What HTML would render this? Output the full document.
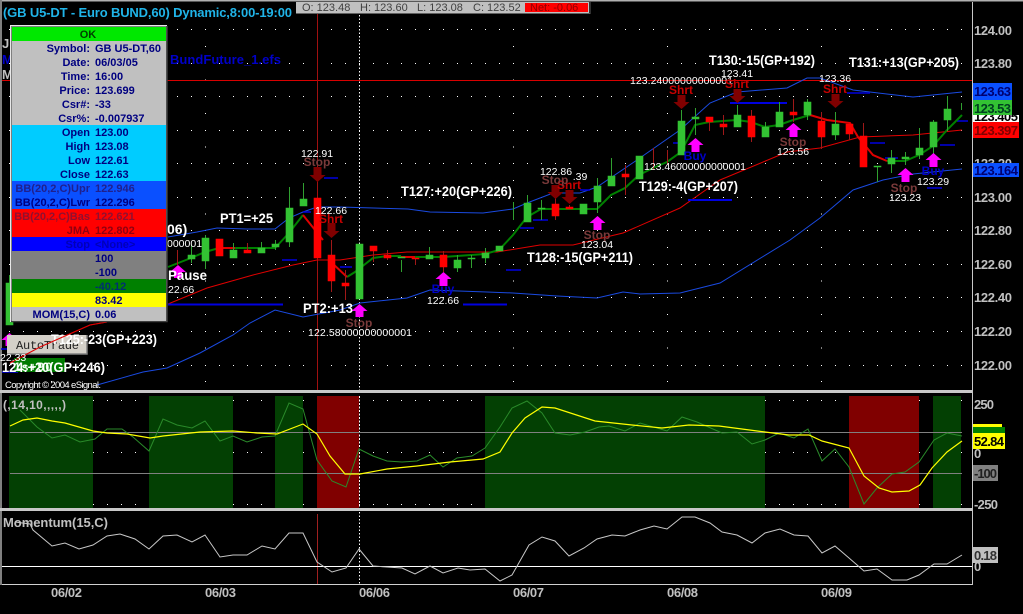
<!DOCTYPE html>
<html><head><meta charset="utf-8"><style>
html,body{margin:0;padding:0;background:#000;width:1023px;height:614px;overflow:hidden}
svg{display:block;position:absolute;left:0;top:0}
text{font-family:"Liberation Sans",sans-serif}
.w{fill:#fff;font-size:14px;font-weight:bold}
.s{fill:#fff;font-size:10.5px;text-anchor:middle}
.st{fill:#7a3a3a;font-size:12px;font-weight:bold;text-anchor:middle}
.sh{fill:#c80000;font-size:12px;font-weight:bold;text-anchor:middle}
.b{fill:#0000c8;font-size:12px;font-weight:bold;text-anchor:middle}
.a{fill:#c0c0c0;font-size:13px;font-weight:bold}
.n{fill:#000070;font-size:13px;font-weight:bold}
.p{fill:#000080;font-size:11px;font-weight:bold}
.pr{text-anchor:end}
</style></head><body>
<svg width="1023" height="614" viewBox="0 0 1023 614" xmlns="http://www.w3.org/2000/svg">
<rect width="1023" height="614" fill="#000"/>
<rect x="0" y="0" width="1023" height="1.5" fill="#b0b0b0"/>
<rect x="0" y="0" width="2" height="585" fill="#808080"/>
<g stroke="#fff" stroke-width="1" stroke-dasharray="1 13" fill="none">
<path d="M9 29.5H966M9 63.5H966M9 96.5H966M9 130.5H966M9 163.5H966M9 197.5H966M9 230.5H966M9 264.5H966M9 297.5H966M9 331.5H966M9 365.5H966"/>
<path d="M9 400.5H966M9 452.5H966M9 504.5H966"/>
</g>
<g stroke="#fff" stroke-width="1" stroke-dasharray="1 32.5" fill="none">
<path d="M205.5 46V390M513.5 46V390M667.5 46V390M821.5 46V390M51.5 46V390"/>
</g>
<path d="M359.5 15V584" stroke="#fff" stroke-width="1" stroke-dasharray="1.5 2" fill="none"/>
<path d="M2 80.5H972" stroke="#d80000" fill="none"/>
<path d="M317.5 14V390" stroke="#a01010" fill="none"/>
<polyline fill="none" stroke="#c00000" points="10,363 40,347 90,325 107,322"/>
<polyline fill="none" stroke="#e00000" points="168,304 207,288 253,275 293,265 317,260 340,260 373,255 407,252 440,252 497,252 540,245 573,245 623,233 680,208 720,180 787,152 820,148 860,137 913,135 962,130"/>
<polyline fill="none" stroke="#1a4ae0" points="168,237 197,232 217,228 247,229 275,229 289,218 303,212 317,207 340,207 408,209 430,212 483,213 513,209 527,203 553,193 580,193 597,187 637,160 680,130 710,103 737,92 787,88 807,78 820,78 853,90 913,97 962,92"/>
<polyline fill="none" stroke="#1a4ae0" points="97,385 143,372 167,368 200,353 233,335 250,323 275,310 303,317 340,310 360,303 407,298 430,290 487,292 513,293 557,296 597,298 623,292 640,294 680,293 720,283 790,240 820,218 853,190 883,180 913,174 962,169"/>
<path d="M168 304.500H283M463 304.500H507M688 200H732M730 103H787" stroke="#0000e0" stroke-width="2" fill="none"/>
<path d="M282 260H297M303 212H311M324 178H338M340 267H352M506 270H521M520 228H534M533 220H548M580 190H590M673 143H683M847 93H870M870 143H885M885 158H898M940 145H955M957 121H968M927 188H942M2 372H18M1 349H7" stroke="#0000e0" stroke-width="1.500" fill="none"/>
<path d="M168 267L191 258L205 252L219 248H275L289 233L303 215M347 277L355 272L373 258L387 256H401M415 257L443 257L485 254L499 250L513 235L527 217L541 209H597L611 195L625 188L639 175L653 168L667 162L681 152L695 125L709 122L737 120L751 122L765 127L779 125L793 120L810 115M887 161L905 161L919 155L933 146L947 130L962 115" stroke="#008000" stroke-width="2" fill="none"/>
<path d="M303 215L323 240M332 263L347 277M401 257H415M219 248H235M810 115L827 120L850 123L858 137L863 143L873 155L887 161" stroke="#e00000" stroke-width="2" fill="none"/>
<path d="M9.500 275V325M191.500 245V263M205.500 235V269M233.500 243V258M261.500 242V253M275.500 240V250M289.500 187V247M303.500 183V206M401.500 260V272M429.500 247V259M457.500 255V272M471.500 255V268M485.500 248V263M513.500 202V220M527.500 195V222M541.500 200V220M597.500 178V213M611.500 158V186M681.500 110V155M695.500 108V135M737.500 105V127M765.500 122V137M779.500 102V127M807.500 99V120M835.500 112V140M877.500 166V182M891.500 150V173M905.500 152V165M919.500 128V159M933.500 120V165M947.500 96V131M961.500 103V110" stroke="#30a030" fill="none"/>
<path d="M177.500 250V265M247.500 243V253M331.500 240V292M345.500 270V300M373.500 246V262M387.500 250V260M415.500 258V265M443.500 251V272M555.500 195V220M569.500 205V209M625.500 165V195M653.500 148V170M667.500 150V165M709.500 122V131M723.500 115V135M751.500 110V142M793.500 99V122M821.500 112V149M849.500 125V140M863.500 123V167" stroke="#a01818" fill="none"/>
<path fill="#33c233" stroke="#33c233" stroke-width=".6" d="M6 283h7V325h-7zM188 255h7V259h-7zM202 238h7V261h-7zM230 250h7V258h-7zM258 248h7V253h-7zM272 244h7V247h-7zM286 208h7V242h-7zM300 199h7V206h-7zM356 244h7V299h-7zM398 257h7V258h-7zM426 255h7V259h-7zM454 260h7V268h-7zM468 258h7V259h-7zM482 253h7V258h-7zM496 246h7V251h-7zM524 203h7V222h-7zM538 208h7V209h-7zM580 204h7V214h-7zM594 186h7V202h-7zM608 176h7V186h-7zM636 156h7V179h-7zM678 121h7V155h-7zM692 117h7V119h-7zM734 115h7V127h-7zM762 127h7V137h-7zM776 112h7V127h-7zM804 102h7V115h-7zM832 124h7V135h-7zM874 166h7V167h-7zM888 158h7V164h-7zM902 157h7V159h-7zM916 148h7V155h-7zM930 122h7V147h-7zM944 109h7V120h-7z"/>
<path fill="#ff0000" stroke="#ff0000" stroke-width=".6" d="M216 239h7V256h-7zM244 250h7V253h-7zM314 198h7V258h-7zM328 255h7V281h-7zM342 283h7V286h-7zM370 246h7V251h-7zM384 255h7V258h-7zM412 258h7V259h-7zM440 255h7V267h-7zM552 204h7V216h-7zM566 207h7V209h-7zM622 174h7V177h-7zM706 117h7V122h-7zM720 124h7V127h-7zM748 116h7V137h-7zM790 112h7V115h-7zM818 121h7V137h-7zM846 124h7V134h-7zM860 136h7V167h-7z"/>
<path fill="#ff00ff" d="M9.500 333l8 7h-4v6h-8v-6h-4zM178 265l8 7h-4v6h-8v-6h-4zM359.500 304l8 7h-4v6h-8v-6h-4zM443.500 272l8 7h-4v7h-8v-7h-4zM597.500 216l8 7h-4v7h-8v-7h-4zM695.500 138l8 7h-4v7h-8v-7h-4zM793.500 123l8 7h-4v7h-8v-7h-4zM905.500 168l8 7h-4v7h-8v-7h-4zM933.500 153l8 7h-4v7h-8v-7h-4z"/>
<path fill="#800000" d="M317.500 182l-8 -7h4v-8h8v8h4zM331.500 238l-8 -7h4v-8h8v8h4zM555.500 199l-8 -7h4v-7h8v7h4zM569.500 204l-8 -7h4v-7h8v7h4zM681.500 109l-8 -7h4v-7h8v7h4zM737.500 103l-8 -7h4v-7h8v7h4zM835.500 108l-8 -7h4v-7h8v7h4z"/>
<text class="s" x="317" y="157">122.91</text><text class="st" x="317" y="166">Stop</text>
<text class="s" x="331" y="214">122.66</text><text class="sh" x="331" y="223">Shrt</text>
<text class="st" x="359" y="327">Stop</text>
<text class="s" x="308" y="336" style="text-anchor:start" textLength="104">122.58000000000001</text>
<text class="b" x="443" y="293">Buy</text><text class="s" x="443" y="304">122.66</text>
<text class="s" x="556" y="175">122.86</text><text class="s" x="580" y="180">.39</text>
<text class="sh" x="569" y="189">Shrt</text><text class="st" x="555" y="184">Stop</text>
<text class="st" x="597" y="239">Stop</text><text class="s" x="597" y="248">123.04</text>
<text class="s" x="644" y="170" style="text-anchor:start" textLength="102">123.46000000000001</text>
<text class="b" x="695" y="160">Buy</text>
<text class="s" x="630" y="84" style="text-anchor:start" textLength="103">123.24000000000001</text>
<text class="sh" x="681" y="94">Shrt</text>
<text class="s" x="737" y="77">123.41</text><text class="sh" x="737" y="88">Shrt</text>
<text class="s" x="835" y="82">123.36</text><text class="sh" x="835" y="93">Shrt</text>
<text class="st" x="793" y="146">Stop</text><text class="s" x="793" y="155">123.56</text>
<text class="st" x="904" y="192">Stop</text><text class="s" x="905" y="201">123.23</text>
<text class="b" x="933" y="175">Buy</text><text class="s" x="933" y="185">123.29</text>
<text class="w" x="401" y="196" textLength="111" lengthAdjust="spacingAndGlyphs">T127:+20(GP+226)</text>
<text class="w" x="527" y="262" textLength="106" lengthAdjust="spacingAndGlyphs">T128:-15(GP+211)</text>
<text class="w" x="639" y="191" textLength="99" lengthAdjust="spacingAndGlyphs">T129:-4(GP+207)</text>
<text class="w" x="709" y="65" textLength="106" lengthAdjust="spacingAndGlyphs">T130:-15(GP+192)</text>
<text class="w" x="849" y="67" textLength="110" lengthAdjust="spacingAndGlyphs">T131:+13(GP+205)</text>
<text class="w" x="220" y="223" textLength="53" lengthAdjust="spacingAndGlyphs">PT1=+25</text>
<text class="w" x="303" y="313" textLength="50" lengthAdjust="spacingAndGlyphs">PT2:+13</text>
<text class="w" x="168" y="280" textLength="39" lengthAdjust="spacingAndGlyphs">Pause</text>
<text class="s" x="168" y="293" style="text-anchor:start">22.66</text>
<text class="w" x="167" y="234">06)</text>
<text class="s" x="167" y="247" style="text-anchor:start">000001</text>
<text x="170" y="64" fill="#0000c8" font-size="13" font-weight="bold" textLength="111">BundFuture_1.efs</text>
<text x="2" y="48" fill="#c0c0c0" font-size="13" font-weight="bold">J</text>
<text x="2" y="64" fill="#0000c8" font-size="13" font-weight="bold">M</text>
<text x="2" y="79" fill="#c0c0c0" font-size="13" font-weight="bold">M</text>
<rect x="7" y="335" width="80" height="19" fill="#d4d0c8"/><path d="M7 354H87V335" stroke="#808080" fill="none" stroke-width="1.500"/>
<text x="16" y="349" fill="#222" font-size="12" style="font-family:'Liberation Mono',monospace" textLength="63">AutoTrade</text>
<text class="w" x="51" y="344" textLength="106" lengthAdjust="spacingAndGlyphs">T125:-23(GP+223)</text>
<rect x="14" y="358" width="51" height="14" fill="#007a00"/>
<polyline fill="none" stroke="#e00000" points="10,363 40,347 90,325 107,322"/>
<text class="s" x="0" y="361" style="text-anchor:start">22.33</text>
<text x="14" y="371" fill="#e8ffe8" font-size="12" font-weight="bold" textLength="38">1s+90</text>
<text class="w" x="2" y="372" textLength="103" lengthAdjust="spacingAndGlyphs">124:+20(GP+246)</text>
<text x="5" y="388" fill="#fff" font-size="9.500" textLength="96">Copyright © 2004 eSignal.</text>
<rect x="10" y="25" width="157" height="297" fill="#808080"/>
<path d="M10.500 322V25.500H167" stroke="#e8e8e8" fill="none"/>
<path d="M11 321.500H167V26" stroke="#404040" stroke-width="1.500" fill="none"/>
<rect x="12" y="27" width="154" height="14" fill="#00e800"/>
<rect x="12" y="41" width="154" height="84" fill="#c0c0c0"/>
<rect x="12" y="125" width="154" height="56" fill="#00ccff"/>
<rect x="12" y="181" width="154" height="28" fill="#0a50ff"/>
<rect x="12" y="209" width="154" height="28" fill="#ff0000"/>
<rect x="12" y="237" width="154" height="14" fill="#0000ff"/>
<rect x="12" y="251" width="154" height="28" fill="#808080"/>
<rect x="12" y="279" width="154" height="14" fill="#008000"/>
<rect x="12" y="293" width="154" height="14" fill="#ffff00"/>
<rect x="12" y="307" width="154" height="14" fill="#c0c0c0"/>
<text class="p" x="88" y="38" text-anchor="middle" style="fill:#004000">OK</text>
<g>
<text class="p pr" x="90" y="52">Symbol:</text><text class="p" x="95" y="52">GB U5-DT,60</text>
<text class="p pr" x="90" y="66">Date:</text><text class="p" x="95" y="66">06/03/05</text>
<text class="p pr" x="90" y="80">Time:</text><text class="p" x="95" y="80">16:00</text>
<text class="p pr" x="90" y="94">Price:</text><text class="p" x="95" y="94">123.699</text>
<text class="p pr" x="90" y="108">Csr#:</text><text class="p" x="95" y="108">-33</text>
<text class="p pr" x="90" y="122">Csr%:</text><text class="p" x="95" y="122">-0.007937</text>
<text class="p pr" x="90" y="136">Open</text><text class="p" x="95" y="136">123.00</text>
<text class="p pr" x="90" y="150">High</text><text class="p" x="95" y="150">123.08</text>
<text class="p pr" x="90" y="164">Low</text><text class="p" x="95" y="164">122.61</text>
<text class="p pr" x="90" y="178">Close</text><text class="p" x="95" y="178">122.63</text>
<text class="p pr" x="90" y="192" style="fill:#20208c">BB(20,2,C)Upr</text><text class="p" x="95" y="192" style="fill:#20208c">122.946</text>
<text class="p pr" x="90" y="206">BB(20,2,C)Lwr</text><text class="p" x="95" y="206">122.296</text>
<text class="p pr" x="90" y="220" style="fill:#901030">BB(20,2,C)Bas</text><text class="p" x="95" y="220" style="fill:#901030">122.621</text>
<text class="p pr" x="90" y="234" style="fill:#900010">JMA</text><text class="p" x="95" y="234" style="fill:#900010">122.802</text>
<text class="p pr" x="90" y="248" style="fill:#0000b8">Stop</text><text class="p" x="95" y="248" style="fill:#0000b8">&lt;None&gt;</text>
<text class="p" x="95" y="262">100</text>
<text class="p" x="95" y="276">-100</text>
<text class="p" x="95" y="290" style="fill:#003070">-40.12</text>
<text class="p" x="95" y="304">83.42</text>
<text class="p pr" x="90" y="318">MOM(15,C)</text><text class="p" x="95" y="318">0.06</text>
</g>
<text x="3" y="17" fill="#20b4e8" font-size="13" font-weight="bold" textLength="289">(GB U5-DT - Euro BUND,60) Dynamic,8:00-19:00</text>
<rect x="296" y="2" width="293" height="11" fill="#c0c0c0"/>
<rect x="525" y="3" width="63" height="9" fill="#ff0000"/>
<path d="M296 13.500H590V2" stroke="#606060" fill="none"/>
<g fill="#404040" font-size="11"><text x="302" y="11">O: 123.48</text><text x="360" y="11">H: 123.60</text><text x="417" y="11">L: 123.08</text><text x="473" y="11">C: 123.52</text><text x="530" y="11" fill="#900000">Net: -0.06</text></g>
<rect x="0" y="390" width="973" height="3" fill="#c8c8c8"/>
<rect x="0" y="508" width="973" height="3" fill="#c8c8c8"/>
<rect x="2" y="393" width="970" height="3" fill="#000"/>
<g fill="#034003">
<rect x="9" y="396" width="84" height="112"/><rect x="149" y="396" width="84" height="112"/><rect x="275" y="396" width="28" height="112"/><rect x="485" y="396" width="280" height="112"/><rect x="933" y="396" width="28" height="112"/>
</g>
<rect x="317" y="396" width="42" height="112" fill="#800000"/><rect x="849" y="396" width="70" height="112" fill="#800000"/>
<path d="M359.500 396V508" stroke="#fff" stroke-dasharray="1.500 2" fill="none"/>
<path d="M10 432.500H962M10 473.500H962" stroke="#808080" fill="none"/>
<polyline fill="none" stroke="#2a8a2a" points="20,410 37,427 52,438 65,435 80,442 95,439 107,429 122,429 133,437 149,451 163,419 177,425 192,428 205,421 220,441 233,436 247,442 262,437 275,436 289,403 303,409 317,460 332,481 346,487 359,449 373,456 387,461 402,462 417,461 430,455 443,467 457,458 472,456 485,448 500,427 512,408 527,401 542,413 555,433 570,435 585,432 599,427 609,426 625,431 640,423 667,431 682,417 697,422 722,433 737,432 752,444 765,440 779,433 794,438 808,429 822,461 835,449 849,467 864,504 877,488 892,474 905,472 919,462 934,440 947,433 962,436"/>
<polyline fill="none" stroke="#ffff00" stroke-width="1.200" points="10,426 23,420 37,418 52,421 65,423 93,431 107,433 127,434 150,438 163,436 200,432 233,431 257,433 277,434 303,424 317,434 330,456 345,474 360,474 387,469 417,466 450,462 483,459 500,452 512,433 525,418 542,407 555,408 595,421 632,425 662,428 689,425 719,426 765,432 789,435 809,435 822,441 849,448 864,476 879,488 892,492 909,491 920,485 932,468 947,452 962,441"/>
<text x="3" y="409" fill="#c0c0c0" font-size="12" font-weight="bold" textLength="63">(,14,10,,,,,)</text>
<text x="3" y="527" fill="#c0c0c0" font-size="13" font-weight="bold" textLength="105">Momentum(15,C)</text>
<path d="M317.500 514V584" stroke="#a02020" fill="none"/>
<path d="M2 566.500H972" stroke="#fff" fill="none"/>
<path d="M2 584.500H972" stroke="#d0d0d0" fill="none"/>
<polyline fill="none" stroke="#c8c8c8" points="15,522 30,524 33,530 52,546 65,543 79,549 93,545 107,536 120,534 135,539 149,549 163,536 177,535 192,542 205,535 220,557 233,555 247,555 262,546 275,549 289,533 303,533 317,562 332,572 346,568 359,549 373,566 387,567 402,568 415,574 430,566 443,573 458,568 470,570 485,569 500,581 512,575 529,545 542,537 555,541 569,556 584,548 597,539 612,535 625,536 640,530 654,526 667,529 682,517 695,517 710,523 722,532 737,535 752,543 765,533 780,529 794,535 808,536 822,553 835,546 849,558 864,571 877,569 892,580 907,580 919,575 934,564 947,564 962,555"/>
<g fill="#c0c0c0" font-size="13" font-weight="bold">
<text x="51" y="597" textLength="31">06/02</text><text x="205" y="597" textLength="31">06/03</text><text x="359" y="597" textLength="31">06/06</text><text x="513" y="597" textLength="31">06/07</text><text x="667" y="597" textLength="31">06/08</text><text x="821" y="597" textLength="31">06/09</text>
</g>
<path d="M972.500 2V585" stroke="#c8c8c8" fill="none"/>
<g>
<text class="a" x="974" y="35" textLength="38">124.00</text>
<text class="a" x="974" y="68" textLength="38">123.80</text>
<text class="a" x="974" y="168" textLength="38">123.20</text>
<text class="a" x="974" y="202" textLength="38">123.00</text>
<text class="a" x="974" y="235" textLength="38">122.80</text>
<text class="a" x="974" y="269" textLength="38">122.60</text>
<text class="a" x="974" y="302" textLength="38">122.40</text>
<text class="a" x="974" y="336" textLength="38">122.20</text>
<text class="a" x="974" y="370" textLength="38">122.00</text>
</g>
<rect x="973" y="83" width="39" height="17" fill="#0a50ff"/><text class="n" x="974" y="96" textLength="37">123.63</text>
<rect x="973" y="115" width="46" height="7" fill="#fff"/><text x="974" y="121" fill="#000" font-size="13" font-weight="bold" textLength="44">123.405</text>
<rect x="973" y="100" width="39" height="15" fill="#33c233"/><text x="974" y="113" fill="#004020" font-size="13" font-weight="bold" textLength="37">123.53</text>
<rect x="973" y="122" width="46" height="16" fill="#ff0000"/><text x="974" y="135" fill="#800000" font-size="13" font-weight="bold" textLength="44">123.397</text>
<rect x="973" y="163" width="46" height="14" fill="#0a50ff"/><text class="n" x="974" y="175" textLength="44">123.164</text>
<rect x="973" y="424" width="29" height="3" fill="#ffff00"/>
<rect x="973" y="427" width="32" height="6" fill="#008000"/>
<rect x="973" y="433" width="32" height="16" fill="#ffff00"/><text x="974" y="446" fill="#000" font-size="13" font-weight="bold" textLength="30">52.84</text>
<rect x="973" y="465" width="25" height="16" fill="#808080"/><text x="974" y="478" fill="#202020" font-size="13" font-weight="bold" textLength="23">-100</text>
<rect x="973" y="547" width="25" height="16" fill="#c0c0c0"/><text x="974" y="560" fill="#303030" font-size="13" font-weight="bold" textLength="23">0.18</text>
<text class="a" x="974" y="409" textLength="20">250</text>
<text class="a" x="974" y="458">0</text>
<text class="a" x="974" y="509" textLength="24">-250</text>
<text class="a" x="974" y="571">0</text>
</svg>
</body></html>
